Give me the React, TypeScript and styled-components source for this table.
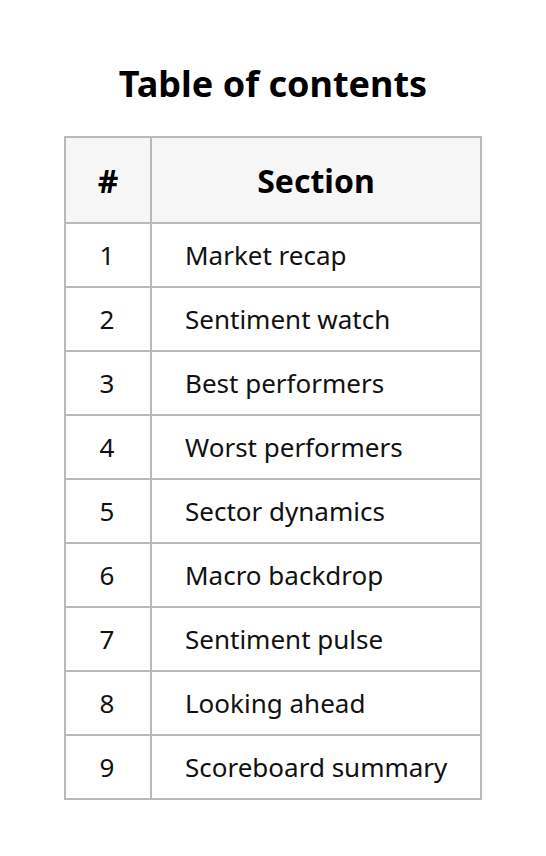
import React from "react";
import styled, { createGlobalStyle } from "styled-components";

const Global = createGlobalStyle`
  html, body { margin: 0; padding: 0; background: #ffffff; }
  body { font-family: "Noto Sans", "Open Sans", sans-serif; color: #111111; }
`;

const Page = styled.div`
  display: flex;
  flex-direction: column;
  align-items: center;
  padding-top: 60px;
`;

const Title = styled.h1`
  margin: 0 0 28px 0;
  font-size: 36px;
  font-weight: 700;
  line-height: 48px;
  color: #000000;
`;

const Table = styled.table`
  border-collapse: collapse;
  width: 418px;
  border: 2px solid #b9b9b9;
`;

const HeadCell = styled.th<{ $w?: number }>`
  border: 2px solid #b9b9b9;
  background: #f6f6f6;
  height: 84px;
  padding: 0;
  font-size: 32px;
  font-weight: 700;
  text-align: center;
  color: #000000;
  ${(p) => (p.$w ? `width: ${p.$w}px;` : "")}
`;

const NumCell = styled.td`
  border: 2px solid #b9b9b9;
  height: 62px;
  padding: 0 2px 0 0;
  font-size: 26px;
  text-align: center;
  color: #111111;
`;

const NameCell = styled.td`
  border: 2px solid #b9b9b9;
  height: 62px;
  padding: 0 0 0 33px;
  font-size: 26px;
  text-align: left;
  color: #111111;
`;

const sections = [
  "Market recap",
  "Sentiment watch",
  "Best performers",
  "Worst performers",
  "Sector dynamics",
  "Macro backdrop",
  "Sentiment pulse",
  "Looking ahead",
  "Scoreboard summary",
];

export default function App() {
  return (
    <>
      <Global />
      <Page>
        <Title>Table of contents</Title>
        <Table>
          <thead>
            <tr>
              <HeadCell $w={84}>#</HeadCell>
              <HeadCell>Section</HeadCell>
            </tr>
          </thead>
          <tbody>
            {sections.map((s, i) => (
              <tr key={s}>
                <NumCell>{i + 1}</NumCell>
                <NameCell>{s}</NameCell>
              </tr>
            ))}
          </tbody>
        </Table>
      </Page>
    </>
  );
}
